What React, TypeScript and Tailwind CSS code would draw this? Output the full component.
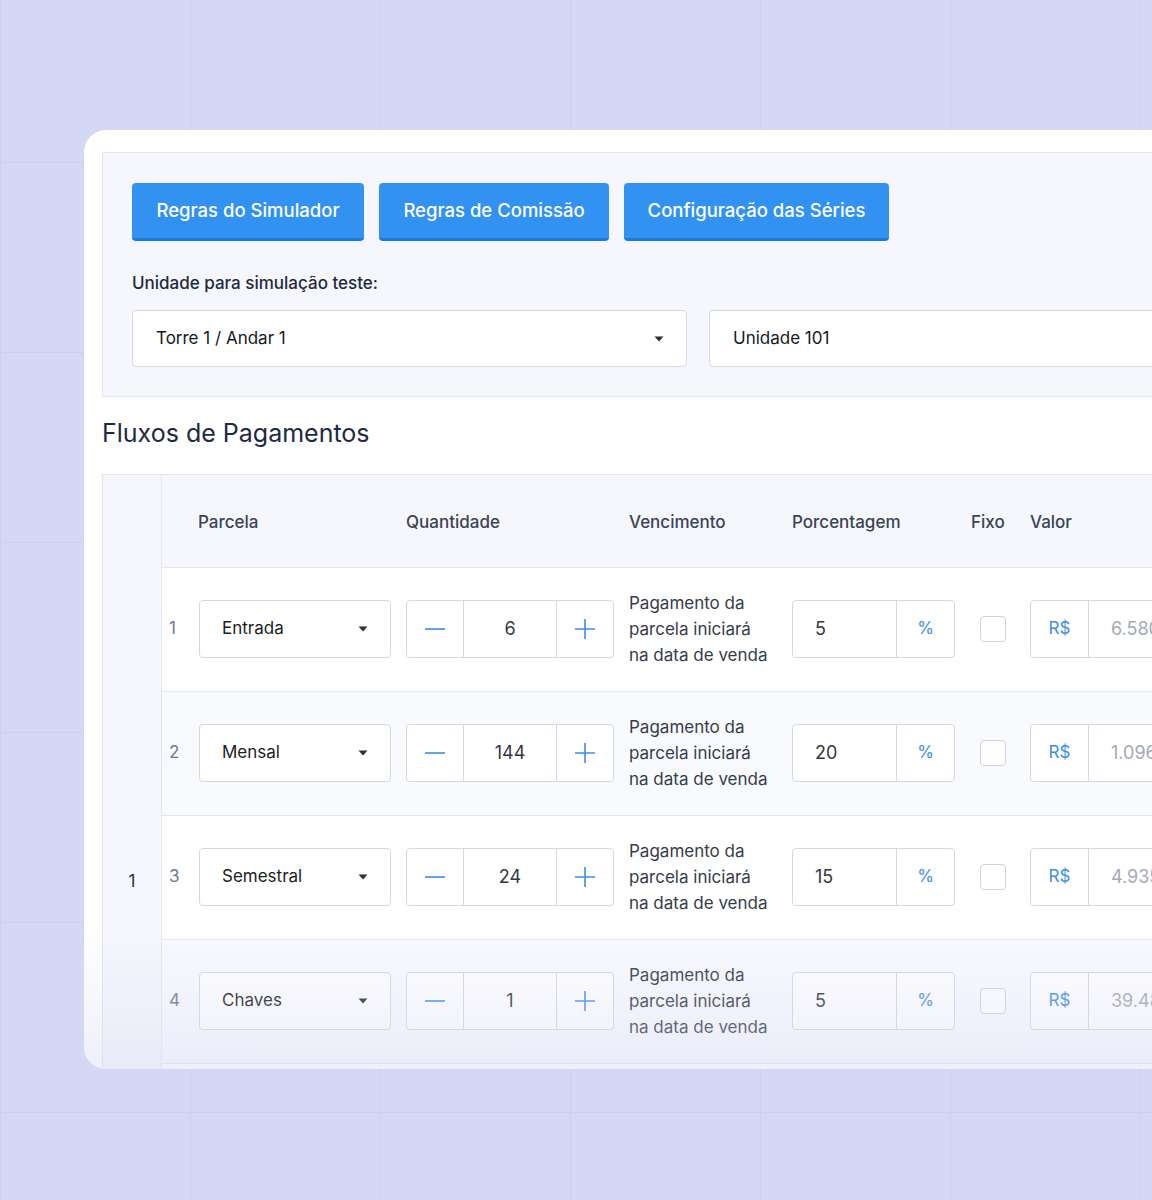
import React from "react";

const rows = [
  { n: 1, tipo: "Entrada", qtd: "6", pct: "5", valor: "6.580,00" },
  { n: 2, tipo: "Mensal", qtd: "144", pct: "20", valor: "1.096,67" },
  { n: 3, tipo: "Semestral", qtd: "24", pct: "15", valor: "4.935,00" },
  { n: 4, tipo: "Chaves", qtd: "1", pct: "5", valor: "39.480,00" },
  { n: 5, tipo: "Anual", qtd: "12", pct: "55", valor: "36.190,00" },
];

function Caret() {
  return (
    <svg width="10" height="6" viewBox="0 0 10 6" className="shrink-0">
      <path d="M0.5 0.5 L9.5 0.5 L5 5.5 Z" fill="#2b2f38" />
    </svg>
  );
}

function Minus() {
  return (
    <svg width="22" height="22" viewBox="0 0 22 22">
      <path d="M1 11 H21" stroke="#3d8fe6" strokeWidth="1.6" />
    </svg>
  );
}

function Plus() {
  return (
    <svg width="22" height="22" viewBox="0 0 22 22">
      <path d="M1 11 H21 M11 1 V21" stroke="#3d8fe6" strokeWidth="1.6" />
    </svg>
  );
}

function Row({ r }: { r: (typeof rows)[number] }) {
  const even = r.n % 2 === 0;
  return (
    <div
      className={`flex items-center h-[124px] pb-[2px] border-t border-[#e4e8f0] ${
        even ? "bg-[#f9fafe]" : "bg-white"
      }`}
    >
      <div className="w-[37px] pl-[7px] text-[17px] text-[#6b7894]">{r.n}</div>
      <div className="w-[192px] h-[58px] rounded-[4px] border border-[#d2d9e3] bg-white flex items-center justify-between pl-[22px] pr-[22px] text-[17px] text-[#1a1d24]">
        <span>{r.tipo}</span>
        <Caret />
      </div>
      <div className="ml-[15px] w-[208px] h-[58px] rounded-[4px] border border-[#d2d9e3] bg-white flex">
        <div className="w-[57px] flex items-center justify-center border-r border-[#d2d9e3]">
          <Minus />
        </div>
        <div className="flex-1 flex items-center justify-center text-[18px] text-[#333842]">
          {r.qtd}
        </div>
        <div className="w-[57px] flex items-center justify-center border-l border-[#d2d9e3]">
          <Plus />
        </div>
      </div>
      <div className="ml-[15px] w-[148px] text-[17px] leading-[26px] text-[#353c4a] whitespace-nowrap">
        Pagamento da
        <br />
        parcela iniciará
        <br />
        na data de venda
      </div>
      <div className="ml-[15px] w-[163px] h-[58px] rounded-[4px] border border-[#d2d9e3] bg-white flex">
        <div className="flex-1 flex items-center pl-[22px] text-[18px] text-[#333842]">
          {r.pct}
        </div>
        <div className="w-[58px] flex items-center justify-center border-l border-[#d2d9e3] text-[17px] text-[#3d8fe6]">
          %
        </div>
      </div>
      <div className="ml-[25px] w-[26px] h-[26px] rounded-[4px] border border-[#cdd4df] bg-white" />
      <div className="ml-[24px] w-[260px] h-[58px] rounded-[4px] border border-[#d2d9e3] bg-white flex shrink-0">
        <div className="w-[58px] flex items-center justify-center border-r border-[#d2d9e3] text-[17px] text-[#3d8fe6]">
          R$
        </div>
        <div className="flex-1 flex items-center pl-[22px] text-[18px] text-[#a3aab6]">
          {r.valor}
        </div>
      </div>
    </div>
  );
}

export default function App() {
  return (
    <div className="w-[1152px] h-[1200px] overflow-hidden bg-[#d5d8f4] bg-[linear-gradient(to_right,#ccd0ef_1px,transparent_1px),linear-gradient(to_bottom,#ccd0ef_1px,transparent_1px)] bg-[size:190px_190px] bg-[position:0px_162px] pt-[130px] pl-[84px] font-['Inter','Noto_Sans',sans-serif]">
      <div className="relative w-[1200px] h-[939px] bg-white rounded-[22px] overflow-hidden pt-[22px] pl-[18px]">
        {/* top panel */}
        <div className="border border-[#e2e6ef] bg-[#f5f7fc] pt-[30px] pb-[29px] pl-[29px]">
          <div className="flex gap-[15px]">
            <button className="w-[232px] h-[58px] rounded-[4px] bg-[#3192f2] border-b-[3px] border-[#1c7ad8] text-white text-[18.5px] font-medium">
              Regras do Simulador
            </button>
            <button className="w-[230px] h-[58px] rounded-[4px] bg-[#3192f2] border-b-[3px] border-[#1c7ad8] text-white text-[18.5px] font-medium">
              Regras de Comissão
            </button>
            <button className="w-[265px] h-[58px] rounded-[4px] bg-[#3192f2] border-b-[3px] border-[#1c7ad8] text-white text-[18.5px] font-medium">
              Configuração das Séries
            </button>
          </div>
          <div className="mt-[31px] text-[17px] leading-[22px] font-medium text-[#1f2a3d]">
            Unidade para simulação teste:
          </div>
          <div className="mt-[16px] flex gap-[22px]">
            <div className="w-[555px] h-[57px] rounded-[4px] border border-[#d2d9e3] bg-white flex items-center justify-between pl-[23px] pr-[22px] text-[17px] text-[#15181e]">
              <span>Torre 1 / Andar 1</span>
              <Caret />
            </div>
            <div className="w-[554px] h-[57px] rounded-[4px] border border-[#d2d9e3] bg-white flex items-center pl-[23px] text-[17px] text-[#15181e]">
              Unidade 101
            </div>
          </div>
        </div>

        {/* heading */}
        <h2 className="mt-[21px] mb-[26px] text-[25px] leading-[30px] text-[#1d2a44]">
          Fluxos de Pagamentos
        </h2>

        {/* table */}
        <div className="flex border-t border-l border-[#e2e6ef]">
          <div className="w-[59px] shrink-0 bg-[#f5f7fc] border-r border-[#e4e8f0] flex flex-col">
            <div className="h-[92px]" />
            <div className="flex-1 flex items-center justify-center pt-[10px] text-[17px] text-[#2a3244]">
              1
            </div>
          </div>
          <div className="flex-1">
            <div className="h-[92px] pt-[3px] bg-[#f5f7fc] flex items-center text-[17px] font-medium text-[#3a4357]">
              <div className="w-[36px]" />
              <div className="w-[208px]">Parcela</div>
              <div className="w-[223px]">Quantidade</div>
              <div className="w-[163px]">Vencimento</div>
              <div className="w-[179px]">Porcentagem</div>
              <div className="w-[59px]">Fixo</div>
              <div>Valor</div>
            </div>
            {rows.map((r) => (
              <Row key={r.n} r={r} />
            ))}
          </div>
        </div>

        {/* bottom fade */}
        <div className="absolute left-0 right-0 bottom-0 h-[140px] bg-linear-to-b from-[#d5d8f4]/0 to-[#d5d8f4]/40 pointer-events-none" />
      </div>
    </div>
  );
}
